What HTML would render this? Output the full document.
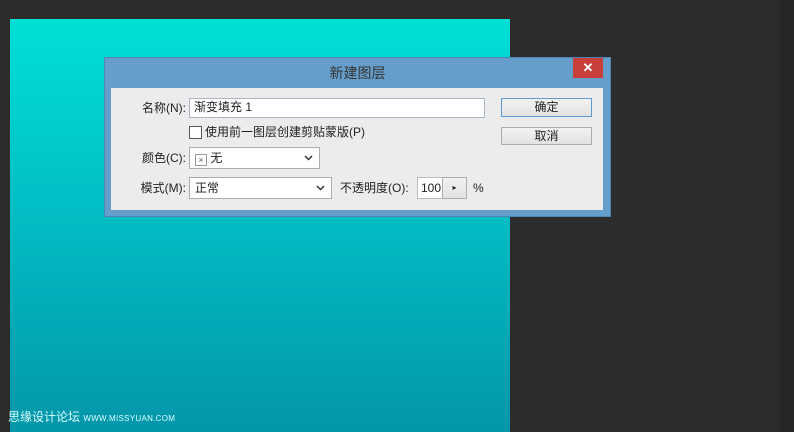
<!DOCTYPE html>
<html><head><meta charset="utf-8"><style>
body{margin:0;width:794px;height:432px;background:#2c2c2c;position:relative;overflow:hidden;font-family:"Liberation Sans","Noto Sans CJK SC",sans-serif;font-size:12px;color:#222}
.a{position:absolute}
.canvas{left:10px;top:19px;width:500px;height:413px;background:linear-gradient(#00e0d5,#02c2c8 40%,#0396aa)}
.strip{left:780px;top:0;width:14px;height:432px;background:#262626}
.dlg{left:104px;top:57px;width:507px;height:160px;background:#669ecb;border:1px solid #4f86b3;box-sizing:border-box}
.title{left:0;top:0;width:100%;height:30px;line-height:30px;text-align:center;font-size:14px;color:#333}
.close{left:468px;top:0;width:30px;height:20px;background:#c9403b;color:#fff;text-align:center;line-height:20px;font-size:13px;font-weight:bold}
.body{left:6px;top:30px;width:492px;height:122px;background:#ececec}
.lbl{text-align:right;width:80px;line-height:20px}
.inp{background:#fff;border:1px solid #a9b6c4;box-sizing:border-box;line-height:17px;padding-left:4px}
.btn{background:linear-gradient(#f2f2f2,#e2e2e2);border:1px solid #acacac;box-sizing:border-box;text-align:center;line-height:17px}
.dd{background:#fff;border:1px solid #acacac;box-sizing:border-box;line-height:20px;padding-left:5px}
.chev{position:absolute;right:6px;top:7px}
</style></head><body>
<div class="a canvas"></div>
<div class="a strip"></div>
<div class="a dlg">
 <div class="a title">新建图层</div>
 <div class="a close">✕</div>
 <div class="a body"></div>
</div>
<div class="a lbl" style="left:106px;top:98px">名称(N):</div>
<div class="a inp" style="left:189px;top:98px;width:296px;height:20px">渐变填充 1</div>
<div class="a btn" style="left:501px;top:98px;width:91px;height:19px;border-color:#5f9ad0">确定</div>
<div class="a btn" style="left:501px;top:127px;width:91px;height:18px">取消</div>
<div class="a" style="left:189px;top:126px;width:11px;height:11px;border:1px solid #555;background:#fff"></div>
<div class="a" style="left:205px;top:122px;line-height:20px">使用前一图层创建剪贴蒙版(P)</div>
<div class="a lbl" style="left:106px;top:148px">颜色(C):</div>
<div class="a dd" style="left:189px;top:147px;width:131px;height:22px"><span style="display:inline-block;width:10px;height:10px;border:1px solid #999;font-size:9px;line-height:10px;text-align:center;color:#666;vertical-align:-1px">×</span> 无<svg class="chev" width="9" height="6"><path d="M1 1L4.5 4.5L8 1" stroke="#333" stroke-width="1.5" fill="none"/></svg></div>
<div class="a lbl" style="left:106px;top:178px">模式(M):</div>
<div class="a dd" style="left:189px;top:177px;width:143px;height:22px">正常<svg class="chev" width="9" height="6"><path d="M1 1L4.5 4.5L8 1" stroke="#333" stroke-width="1.5" fill="none"/></svg></div>
<div class="a" style="left:340px;top:178px;line-height:20px">不透明度(O):</div>
<div class="a inp" style="left:417px;top:177px;width:26px;height:22px;line-height:20px;padding-left:3px;border-color:#bbb">100</div>
<div class="a btn" style="left:442px;top:177px;width:25px;height:22px;line-height:20px;font-size:8px">▸</div>
<div class="a" style="left:473px;top:178px;line-height:20px">%</div>
<div class="a" style="left:8px;top:408px;color:#dff;font-size:12px">思缘设计论坛 <span style="font-size:8px;letter-spacing:0.3px">WWW.MISSYUAN.COM</span></div>
</body></html>
